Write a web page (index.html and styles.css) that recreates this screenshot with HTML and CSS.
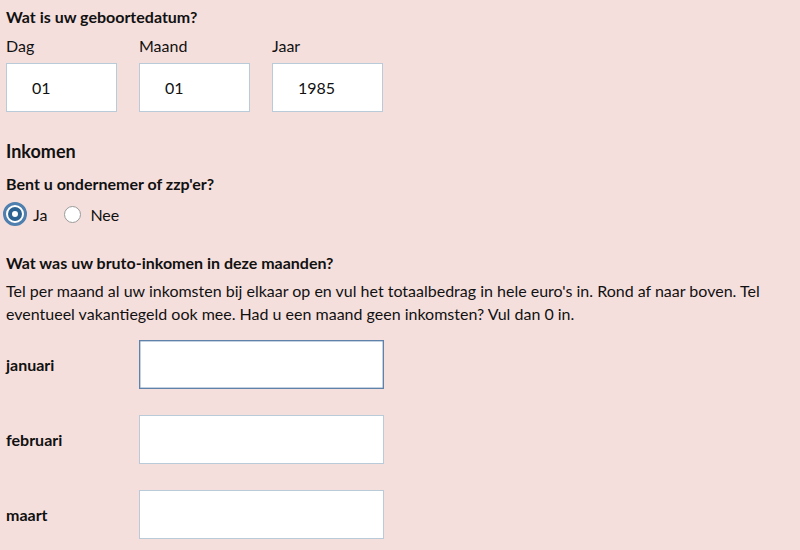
FILE: index.html
```html
<!DOCTYPE html>
<html lang="nl">
<head>
    <meta charset="UTF-8">
    <title>Bruto-inkomen</title>
<link rel="stylesheet" href="styles.css">
</head>
<body>
    <form class="form">
        <p class="question">Wat is uw geboortedatum?</p>
        <div class="date-row">
            <div class="date-field">
                <label for="dag">Dag</label>
                <input type="text" id="dag" class="date-input" value="01">
            </div>
            <div class="date-field">
                <label for="maand">Maand</label>
                <input type="text" id="maand" class="date-input" value="01">
            </div>
            <div class="date-field">
                <label for="jaar">Jaar</label>
                <input type="text" id="jaar" class="date-input" value="1985">
            </div>
        </div>

        <h2 class="section">Inkomen</h2>
        <p class="question">Bent u ondernemer of zzp'er?</p>
        <div class="radios">
            <label class="radio">
                <span class="radio-mark checked"><span class="dot"></span></span>
                Ja
            </label>
            <label class="radio">
                <span class="radio-mark"></span>
                Nee
            </label>
        </div>

        <p class="question gap">Wat was uw bruto-inkomen in deze maanden?</p>
        <p class="hint">Tel per maand al uw inkomsten bij elkaar op en vul het totaalbedrag in hele euro's in. Rond af naar boven. Tel eventueel vakantiegeld ook mee. Had u een maand geen inkomsten? Vul dan 0 in.</p>

        <div class="months">
            <div class="month-row">
                <label for="jan">januari</label>
                <input type="text" id="jan" class="month-input active">
            </div>
            <div class="month-row">
                <label for="feb">februari</label>
                <input type="text" id="feb" class="month-input">
            </div>
            <div class="month-row">
                <label for="mrt">maart</label>
                <input type="text" id="mrt" class="month-input">
            </div>
        </div>
    </form>
</body>
</html>
```

FILE: styles.css
```css
body{
    margin: 0;
    background-color: #f5dfdd;
    font-family: Lato, "Open Sans", sans-serif;
    font-size: 16px;
    color: #111;
}
.form{
    padding: 5px 6px 0 6px;
}
p{
    margin: 0;
}
.question{
    font-weight: bold;
    line-height: 24px;
}
.question.gap{
    margin-top: 25px;
}
.date-row{
    display: flex;
    gap: 22px;
    margin-top: 7px;
}
.date-field{
    display: flex;
    flex-direction: column;
}
.date-field label{
    line-height: 20px;
    margin-bottom: 7px;
}
.date-input{
    box-sizing: border-box;
    width: 111px;
    height: 49px;
    border: 1px solid #b9cbd8;
    background: #fff;
    padding: 0 0 0 25px;
    font-family: inherit;
    font-size: 16px;
    color: #111;
}
.section{
    font-size: 18px;
    margin: 27px 0 0 0;
    line-height: 24px;
}
.section + .question{
    margin-top: 9px;
}
.radios{
    display: flex;
    align-items: center;
    gap: 17px;
    margin-top: 6px;
    margin-left: -3px;
}
.radio{
    display: flex;
    align-items: center;
    gap: 6px;
}
.radio-mark{
    box-sizing: border-box;
    width: 17px;
    height: 17px;
    border-radius: 50%;
    border: 1.5px solid #9a9a9a;
    background: #fff;
    margin-right: 3px;
}
.radio-mark.checked{
    width: 24px;
    height: 24px;
    border: 3px solid #4f7fae;
    background: #fff;
    display: flex;
    align-items: center;
    justify-content: center;
    margin-right: 0;
}
.dot{
    width: 14px;
    height: 14px;
    border-radius: 50%;
    background: #fff;
    border: 4.5px solid #2c6393;
    box-sizing: border-box;
}
.hint{
    margin-top: 4px;
    line-height: 23px;
    max-width: 785px;
}
.months{
    margin-top: 15px;
    display: flex;
    flex-direction: column;
    gap: 26px;
}
.month-row{
    display: grid;
    grid-template-columns: 133px 245px;
    align-items: center;
}
.month-row label{
    font-weight: bold;
}
.month-input{
    box-sizing: border-box;
    height: 49px;
    width: 245px;
    border: 1px solid #b9cbd8;
    background: #fff;
}
.month-input.active{
    border: 1px solid #5f82ab;
    box-shadow: inset 0 0 0 0.5px #8aa3c2;
}
```
